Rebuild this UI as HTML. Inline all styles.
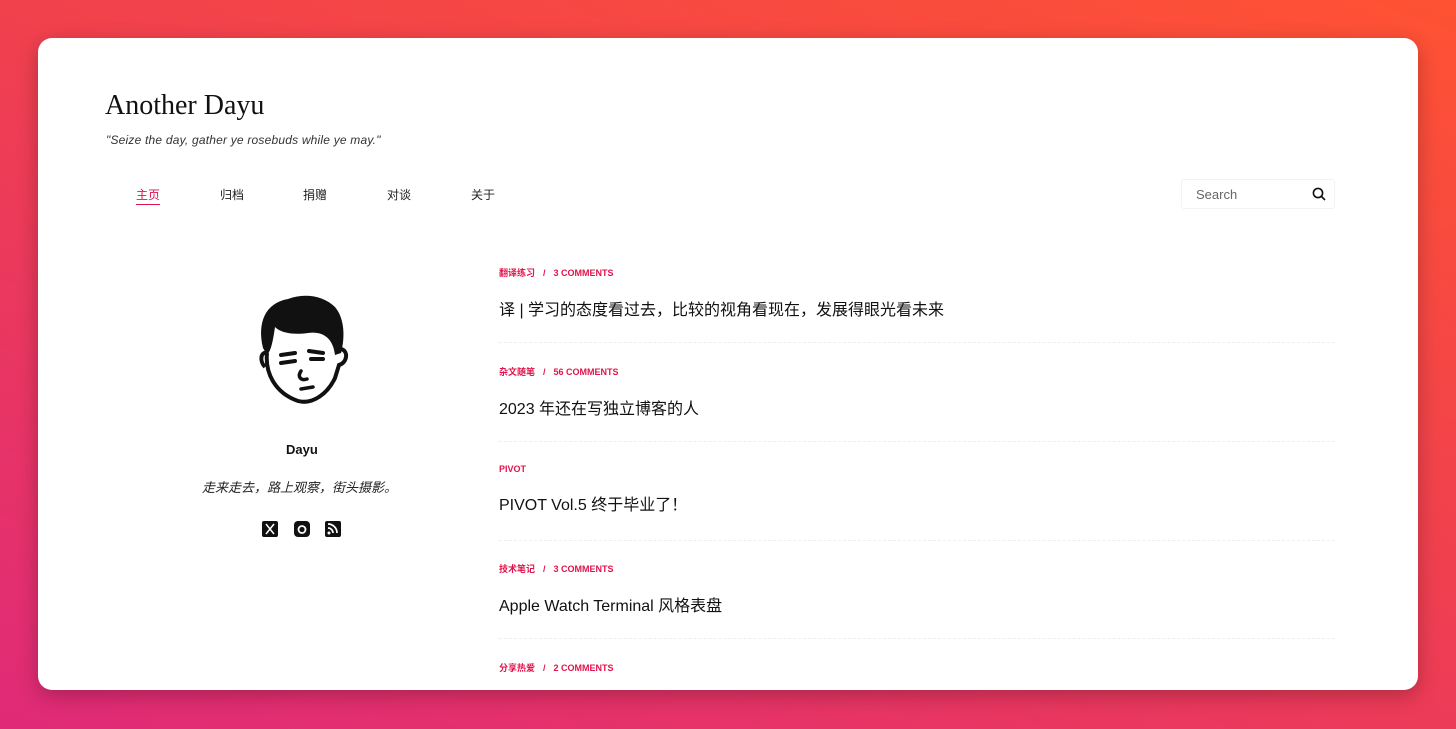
<!DOCTYPE html>
<html><head><meta charset="utf-8"><style>
*{margin:0;padding:0;box-sizing:border-box}
html,body{width:1456px;height:729px;overflow:hidden}
body{background:linear-gradient(200deg,#ff5233 0%,#f0404f 45%,#e02a78 100%);font-family:"Liberation Sans","Noto Sans CJK SC",sans-serif;position:relative}
.card{position:absolute;left:38px;top:38px;width:1380px;height:652px;background:#fff;border-radius:14px;overflow:hidden;box-shadow:0 6px 20px rgba(0,0,0,.25)}
.title{position:absolute;left:67px;top:52px;font-family:"Liberation Serif",serif;font-size:28px;color:#111}
.tag{position:absolute;left:68px;top:95px;font-size:12px;font-style:italic;color:#333;letter-spacing:0.2px}
.nav{position:absolute;top:148px;font-size:12px;color:#222}
.nav.a{color:#e0144c;border-bottom:1px solid #e0144c;padding-bottom:1px}
.search{position:absolute;left:1143px;top:141px;width:154px;height:30px;border:1px solid #f3f3f3;border-radius:3px}
.search span{position:absolute;left:14px;top:7px;font-size:13px;color:#666}
.search svg{position:absolute;right:8px;top:7px}
.name{position:absolute;left:248px;top:404px;font-size:13px;font-weight:bold;color:#111}
.bio{position:absolute;left:164px;top:439px;font-size:13px;font-style:italic;color:#222}
.post{position:absolute;left:461px;width:836px}
.meta{font-size:9px;font-weight:bold;color:#e0144c}
.meta i{font-style:normal;margin:0 8px}
.pt{margin-top:17px;font-size:16px;color:#111}
.hr{position:absolute;left:0;width:836px;height:1px;border-top:1px dashed #eee}
</style></head><body>
<div class="card">
<div class="title">Another Dayu</div>
<div class="tag">"Seize the day, gather ye rosebuds while ye may."</div>
<div class="nav a" style="left:98px">主页</div>
<div class="nav" style="left:182px">归档</div>
<div class="nav" style="left:265px">捐赠</div>
<div class="nav" style="left:349px">对谈</div>
<div class="nav" style="left:433px">关于</div>
<div class="search"><span>Search</span><svg width="14" height="14" viewBox="0 0 14 14"><circle cx="6" cy="6" r="4.6" fill="none" stroke="#111" stroke-width="1.6"/><path d="M9.5 9.5L13 13" stroke="#111" stroke-width="1.6"/></svg></div>
<svg style="position:absolute;left:215px;top:255px" width="100" height="115" viewBox="0 0 100 115">
<path d="M10 55 C4 30 12 10 35 6 C50 0 70 2 82 14 C92 26 92 45 88 60 L82 62 C80 45 70 38 55 40 C40 42 28 40 22 34 C20 48 18 58 14 62 Z" fill="#111"/>
<path d="M14 60 C12 80 22 100 45 108 C60 112 75 100 82 85 L86 72 C94 70 96 58 88 56 L84 58" fill="none" stroke="#111" stroke-width="4"/>
<path d="M14 60 C8 58 6 68 12 74" fill="none" stroke="#111" stroke-width="4"/>
<path d="M28 62 L42 60 M28 70 L42 68 M56 58 L70 60 M58 66 L70 66" stroke="#111" stroke-width="4" stroke-linecap="round"/>
<path d="M48 78 C44 84 48 88 54 86 M48 96 L60 94" fill="none" stroke="#111" stroke-width="3.5" stroke-linecap="round"/>
</svg>
<div class="name">Dayu</div>
<div class="bio">走来走去，路上观察，街头摄影。</div>
<svg style="position:absolute;left:224px;top:482px" width="82" height="18" viewBox="0 0 82 18">
<rect x="0" y="1" width="16" height="16" rx="2" fill="#111"/><path d="M4 4L12 14M12 4L4 14" stroke="#fff" stroke-width="1.5"/>
<rect x="32" y="1" width="16" height="16" rx="4" fill="#111"/><circle cx="40" cy="9.5" r="3.5" fill="none" stroke="#fff" stroke-width="1.8"/>
<rect x="63" y="1" width="16" height="16" rx="2" fill="#111"/><circle cx="67" cy="13" r="1.5" fill="#fff"/><path d="M66 8a5 5 0 0 1 5 5M66 4a9 9 0 0 1 9 9" fill="none" stroke="#fff" stroke-width="1.7"/>
</svg>
<div class="post" style="top:228px"><div class="meta">翻译练习<i>/</i>3 COMMENTS</div><div class="pt">译 | 学习的态度看过去，比较的视角看现在，发展得眼光看未来</div><div class="hr" style="top:76px"></div></div>
<div class="post" style="top:327px"><div class="meta">杂文随笔<i>/</i>56 COMMENTS</div><div class="pt">2023 年还在写独立博客的人</div><div class="hr" style="top:76px"></div></div>
<div class="post" style="top:426px"><div class="meta">PIVOT</div><div class="pt">PIVOT Vol.5 终于毕业了！</div><div class="hr" style="top:76px"></div></div>
<div class="post" style="top:524px"><div class="meta">技术笔记<i>/</i>3 COMMENTS</div><div class="pt">Apple Watch Terminal 风格表盘</div><div class="hr" style="top:76px"></div></div>
<div class="post" style="top:623px"><div class="meta">分享热爱<i>/</i>2 COMMENTS</div></div>
</div>
</body></html>
